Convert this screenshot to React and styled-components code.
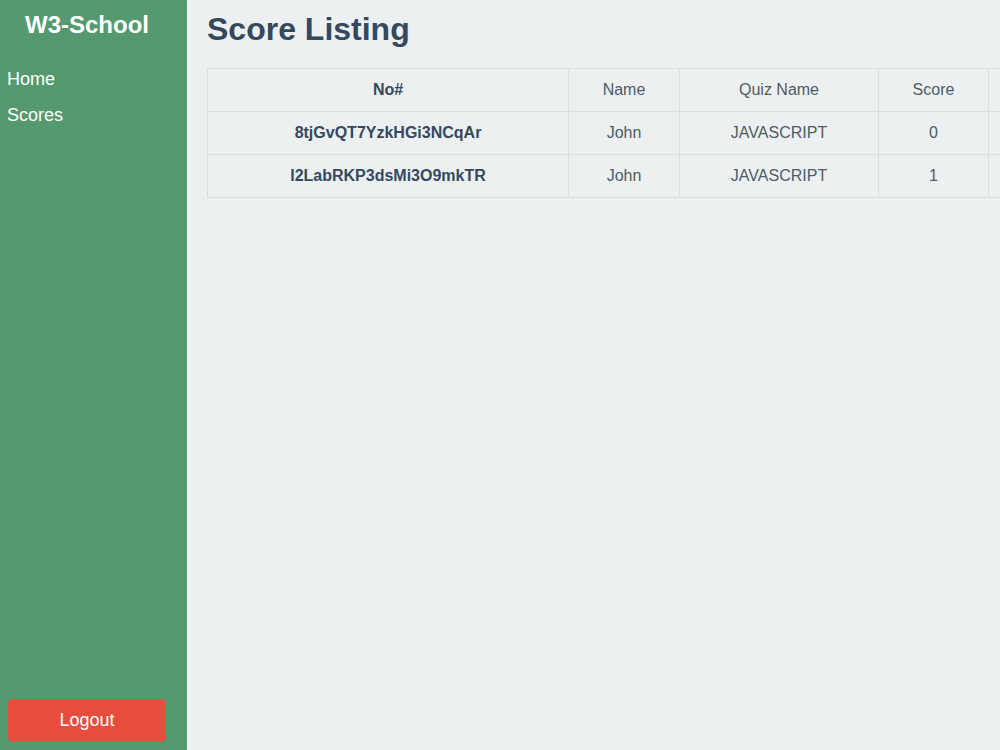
import React from 'react';
import styled, { createGlobalStyle } from 'styled-components';

const GlobalStyle = createGlobalStyle`
	html, body {
		margin: 0;
		padding: 0;
		height: 100%;
		overflow: hidden;
		font-family: "Liberation Sans", Arial, sans-serif;
		background: #ecf0f1;
	}
`;

const Layout = styled.div`
	display: flex;
	height: 100vh;
	width: 100vw;
`;

const Sidebar = styled.aside`
	width: 174px;
	flex-shrink: 0;
	padding-right: 13px;
	background: #559970;
	display: flex;
	flex-direction: column;
`;

const Brand = styled.div`
	color: #fff;
	font-weight: bold;
	font-size: 24px;
	text-align: center;
	padding-top: 11px;
	height: 28px;
	line-height: 28px;
`;

const Nav = styled.nav`
	display: flex;
	flex-direction: column;
	margin-top: 30px;
	padding-left: 7px;
	gap: 15px;
	flex: 1;
`;

const NavLink = styled.a`
	color: #fff;
	font-size: 18px;
	line-height: 21px;
	text-decoration: none;
	cursor: pointer;
`;

const LogoutButton = styled.button`
	margin: 0 0 8px 8px;
	width: 158px;
	height: 43px;
	border: none;
	border-radius: 5px;
	background: #e74c3c;
	color: #fff;
	font-family: inherit;
	font-size: 18px;
	cursor: pointer;
`;

const Main = styled.main`
	flex: 1;
	padding: 0 20px;
	overflow: hidden;
`;

const Title = styled.h1`
	margin: 11px 0 20px;
	font-size: 32px;
	line-height: 37px;
	color: #34495e;
`;

const Table = styled.table`
	border-collapse: collapse;
	table-layout: fixed;
	width: 931px;
	border: 1px solid #d9dedf;
`;

const Cell = styled.td`
	height: 42px;
	padding: 0 8px;
	border: 1px solid #d9dedf;
	text-align: center;
	font-size: 16px;
	font-weight: ${p => (p.$strong ? 'bold' : 'normal')};
	color: ${p => (p.$strong ? '#34495e' : '#4f5b66')};
`;

const rows = [
	{ id: '8tjGvQT7YzkHGi3NCqAr', name: 'John', quiz: 'JAVASCRIPT', score: 0 },
	{ id: 'l2LabRKP3dsMi3O9mkTR', name: 'John', quiz: 'JAVASCRIPT', score: 1 },
];

const App = () => {
	return (
		<Layout>
			<GlobalStyle />
			<Sidebar>
				<Brand>W3-School</Brand>
				<Nav>
					<NavLink>Home</NavLink>
					<NavLink>Scores</NavLink>
				</Nav>
				<LogoutButton>Logout</LogoutButton>
			</Sidebar>
			<Main>
				<Title>Score Listing</Title>
				<Table>
					<colgroup>
						<col style={{ width: 361 }} />
						<col style={{ width: 111 }} />
						<col style={{ width: 199 }} />
						<col style={{ width: 110 }} />
						<col style={{ width: 150 }} />
					</colgroup>
					<thead>
						<tr>
							<Cell as="th" $strong>No#</Cell>
							<Cell as="th">Name</Cell>
							<Cell as="th">Quiz Name</Cell>
							<Cell as="th">Score</Cell>
							<Cell as="th"></Cell>
						</tr>
					</thead>
					<tbody>
						{rows.map(r => (
							<tr key={r.id}>
								<Cell $strong>{r.id}</Cell>
								<Cell>{r.name}</Cell>
								<Cell>{r.quiz}</Cell>
								<Cell>{r.score}</Cell>
								<Cell></Cell>
							</tr>
						))}
					</tbody>
				</Table>
			</Main>
		</Layout>
	);
};

export default App;
